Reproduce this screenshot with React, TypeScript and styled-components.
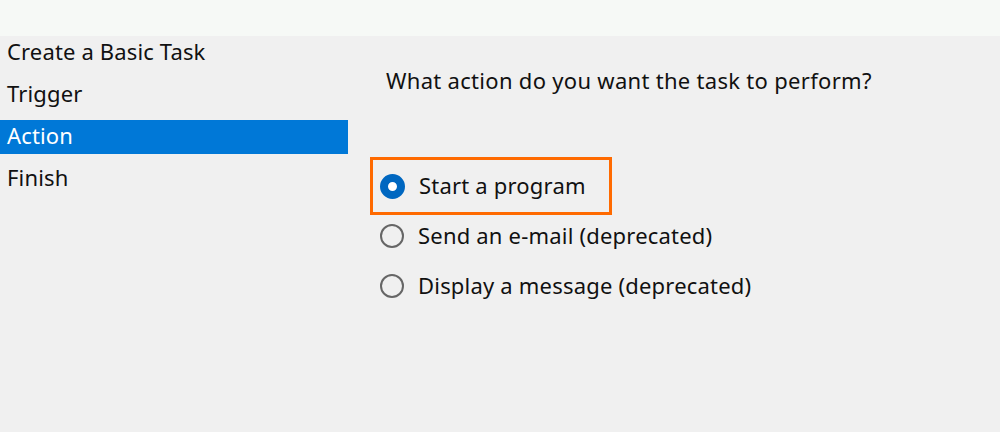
import React from "react";
import styled, { createGlobalStyle } from "styled-components";

const Global = createGlobalStyle`
  html, body { margin: 0; padding: 0; background: #f0f0f0; }
  body { font-family: "Noto Sans", "Open Sans", sans-serif; }
`;

const Page = styled.div`
  width: 1000px;
  height: 432px;
  display: flex;
  flex-direction: column;
  background: #f0f0f0;
  overflow: hidden;
`;

const TopBand = styled.div`
  height: 36px;
  background: #f6f9f6;
  flex: none;
`;

const Body = styled.div`
  flex: 1;
  display: flex;
`;

const Sidebar = styled.ul`
  list-style: none;
  margin: 0;
  padding: 0;
  width: 348px;
  flex: none;
  display: flex;
  flex-direction: column;
`;

const Step = styled.li<{ $active?: boolean }>`
  box-sizing: border-box;
  height: 34px;
  margin: 0 0 8px;
  padding: 0 0 4px 7px;
  display: flex;
  align-items: center;
  font-size: 22px;
  letter-spacing: 0.15px;
  color: ${(p) => (p.$active ? "#ffffff" : "#111111")};
  background: ${(p) => (p.$active ? "#0078d7" : "transparent")};
`;

const Content = styled.div`
  flex: 1;
  padding: 28px 0 0 38px;
  display: flex;
  flex-direction: column;
`;

const Question = styled.div`
  font-size: 22px;
  letter-spacing: 0.3px;
  color: #111111;
  line-height: 32px;
  height: 32px;
`;

const Options = styled.div`
  margin-top: 61px;
  margin-left: -16px;
  display: flex;
  flex-direction: column;
`;

const Option = styled.label<{ $highlight?: boolean }>`
  box-sizing: border-box;
  height: 50px;
  width: ${(p) => (p.$highlight ? "242px" : "auto")};
  display: flex;
  align-items: center;
  gap: 14px;
  padding-left: ${(p) => (p.$highlight ? "7px" : "10px")};
  padding-bottom: 2px;
  border: ${(p) => (p.$highlight ? "3px solid #ff6a00" : "none")};
  font-size: 22px;
  letter-spacing: 0.2px;
  color: #111111;
  &:first-child { height: 58px; margin-bottom: -4px; }
`;

const Radio = styled.span<{ $checked?: boolean }>`
  box-sizing: border-box;
  margin-top: 2px;
  width: ${(p) => (p.$checked ? "25px" : "24px")};
  height: ${(p) => (p.$checked ? "25px" : "24px")};
  border-radius: 50%;
  flex: none;
  border: ${(p) => (p.$checked ? "8px solid #0067c0" : "2px solid #666666")};
  background: ${(p) => (p.$checked ? "#ffffff" : "transparent")};
`;

export default function App() {
  return (
    <Page>
      <Global />
      <TopBand />
      <Body>
        <Sidebar>
          <Step>Create a Basic Task</Step>
          <Step>Trigger</Step>
          <Step $active>Action</Step>
          <Step>Finish</Step>
        </Sidebar>
        <Content>
          <Question>What action do you want the task to perform?</Question>
          <Options>
            <Option $highlight>
              <Radio $checked />
              Start a program
            </Option>
            <Option>
              <Radio />
              Send an e-mail (deprecated)
            </Option>
            <Option>
              <Radio />
              Display a message (deprecated)
            </Option>
          </Options>
        </Content>
      </Body>
    </Page>
  );
}
